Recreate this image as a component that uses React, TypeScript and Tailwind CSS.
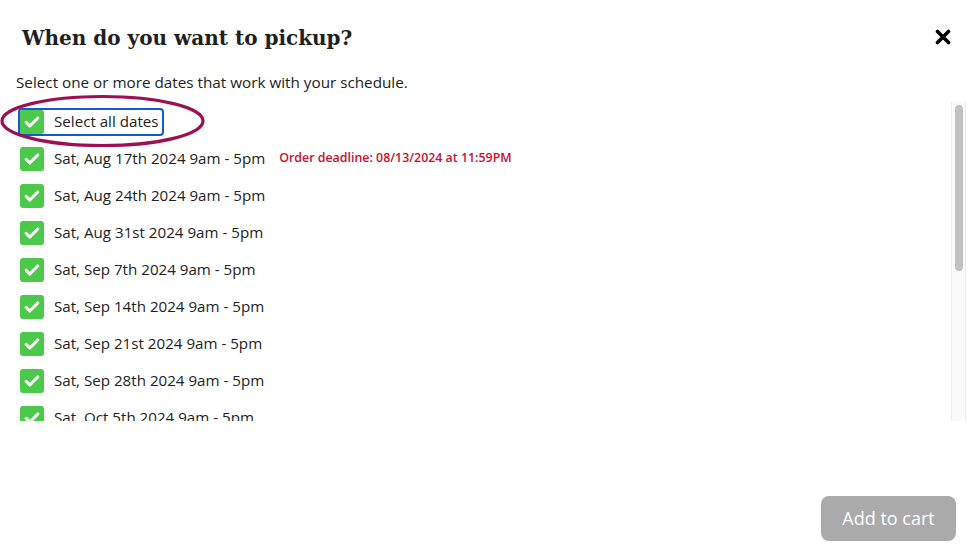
import React from 'react';

const DATES = [
  'Sat, Aug 17th 2024 9am - 5pm',
  'Sat, Aug 24th 2024 9am - 5pm',
  'Sat, Aug 31st 2024 9am - 5pm',
  'Sat, Sep 7th 2024 9am - 5pm',
  'Sat, Sep 14th 2024 9am - 5pm',
  'Sat, Sep 21st 2024 9am - 5pm',
  'Sat, Sep 28th 2024 9am - 5pm',
  'Sat, Oct 5th 2024 9am - 5pm',
  'Sat, Oct 12th 2024 9am - 5pm',
];

const Check: React.FC = () => (
  <span className="w-6 h-6 shrink-0 rounded-[3px] bg-[#4cc94a] flex items-center justify-center">
    <svg width="18" height="18" viewBox="0 0 18 18" fill="none">
      <path d="M3.2 9.4l3.6 3.6 8-8" stroke="#fff" strokeWidth="3.1" strokeLinecap="round" strokeLinejoin="round" />
    </svg>
  </span>
);

export default function App() {
  return (
    <div
      className="w-[979px] h-[552px] bg-white relative flex flex-col text-[#222]"
      style={{ fontFamily: '"Open Sans", "Noto Sans", sans-serif' }}
    >
      {/* header */}
      <div className="h-[64px] pt-[24px] pl-[22px] pr-[28px] flex items-start justify-between">
        <h2
          className="text-[20px] leading-[28px] font-bold text-[#1f1f1f]"
          style={{ fontFamily: '"DejaVu Serif", "Liberation Serif", serif' }}
        >
          When do you want to pickup?
        </h2>
        <button className="mt-[5px]">
          <svg width="16" height="16" viewBox="0 0 16 16">
            <path d="M2.5 2.5l11 11M13.5 2.5l-11 11" stroke="#000" strokeWidth="3.6" strokeLinecap="round" />
          </svg>
        </button>
      </div>

      <div className="h-[37px] pl-[16px] flex items-center text-[15.25px]">
        Select one or more dates that work with your schedule.
      </div>

      {/* list + scrollbar */}
      <div className="h-[320px] pl-[16px] pr-[13px] flex">
        <div className="flex-1 overflow-hidden pl-[4px] pt-[2px]">
          <div className="h-[37px] flex items-center">
            <label className="flex items-center gap-[10px] pr-[3px] outline-2 outline-[#1558d6] rounded-[2px] text-[15.15px]">
              <Check />
              <span>Select all dates</span>
            </label>
          </div>
          {DATES.map((d, i) => (
            <div key={d} className="h-[37px] flex items-center gap-[10px] text-[15.15px]">
              <Check />
              <span>{d}</span>
              {i === 0 && (
                <span className="ml-[4px] text-[12.4px] font-semibold text-[#c8102e]">
                  Order deadline: 08/13/2024 at 11:59PM
                </span>
              )}
            </div>
          ))}
        </div>
        <div className="w-[15px] border-l border-r border-[#ececec] bg-[#fafafa] pt-[4px] flex justify-center">
          <div className="w-[8px] h-[166px] rounded-full bg-[#c1c1c1]" />
        </div>
      </div>

      {/* footer */}
      <div className="flex-1 flex items-end justify-end pr-[23px] pb-[11px]">
        <button className="w-[135px] h-[45px] rounded-[8px] bg-[#aaaaaa] text-white text-[18px] font-medium">
          Add to cart
        </button>
      </div>

      {/* annotation ellipse */}
      <svg className="absolute left-0 top-[93px] pointer-events-none" width="206" height="56" viewBox="0 0 206 56">
        <ellipse cx="102.5" cy="28" rx="100.5" ry="24.5" fill="none" stroke="#9e0f50" strokeWidth="3.2" />
      </svg>
    </div>
  );
}
